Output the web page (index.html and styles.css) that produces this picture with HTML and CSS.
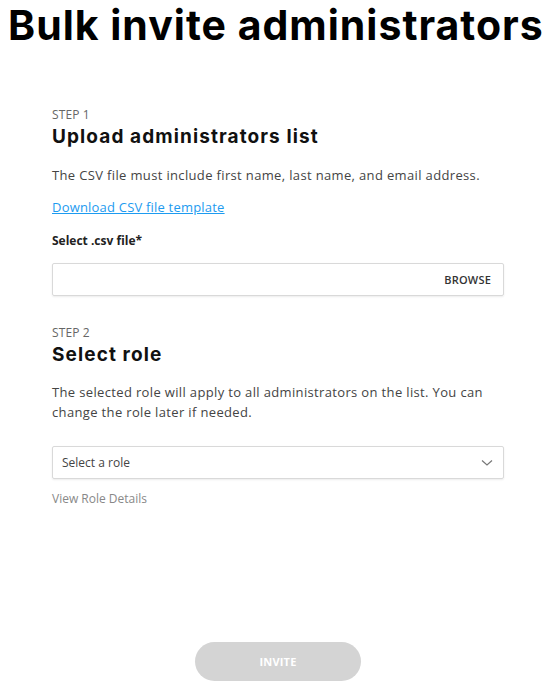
FILE: index.html
```html
<!DOCTYPE html>
<html>
<head>
<meta charset="utf-8">
<link rel="stylesheet" href="styles.css">
</head>
<body>
<h1 class="title">Bulk invite administrators</h1>
<main class="content">
  <section class="step">
    <div class="step-label">STEP 1</div>
    <h2 class="step-title">Upload administrators list</h2>
    <p class="desc">The CSV file must include first name, last name, and email address.</p>
    <a class="link" href="#">Download CSV file template</a>
    <div class="field-label">Select .csv file*</div>
    <div class="input-box">
      <span class="browse">BROWSE</span>
    </div>
  </section>
  <section class="step step2">
    <div class="step-label">STEP 2</div>
    <h2 class="step-title">Select role</h2>
    <p class="desc">The selected role will apply to all administrators on the list. You can<br>change the role later if needed.</p>
    <div class="select-box">
      <span class="placeholder">Select a role</span>
      <svg class="chevron" width="12" height="8" viewBox="0 0 12 8"><path d="M1 1.5 L6 6 L11 1.5" fill="none" stroke="#777" stroke-width="1.2"/></svg>
    </div>
    <div class="details">View Role Details</div>
  </section>
  <div class="actions">
    <button class="invite">INVITE</button>
  </div>
</main>
</body>
</html>
```
FILE: styles.css
```css
* { box-sizing: border-box; }
html, body { margin: 0; padding: 0; background: #fff; }
body {
  font-family: "Open Sans", "Noto Sans", sans-serif;
  width: 556px;
  height: 686px;
  overflow: hidden;
}
.title {
  margin: 0;
  padding: 0 0 0 8px;
  font-family: Inter, sans-serif;
  font-weight: 700;
  font-size: 41px;
  line-height: normal;
  letter-spacing: 1px;
  color: #000;
  white-space: nowrap;
}
.content {
  padding: 58px 52px 0 52px;
  display: flex;
  flex-direction: column;
}
.step { display: flex; flex-direction: column; align-items: flex-start; }
.step-label {
  font-size: 12px;
  line-height: 14px;
  color: #666;
  letter-spacing: 0.1px;
}
.step-title {
  margin: 3px 0 0 0;
  font-family: Inter, sans-serif;
  font-weight: 700;
  font-size: 19px;
  line-height: 24px;
  letter-spacing: 1.1px;
  color: #111;
}
.desc {
  margin: 16px 0 0 0;
  font-size: 13px;
  line-height: 20px;
  letter-spacing: 0.35px;
  color: #444;
  white-space: nowrap;
}
.link {
  margin-top: 14px;
  font-size: 13px;
  line-height: 16px;
  letter-spacing: 0.2px;
  color: #1d9bf0;
  text-decoration: underline;
}
.field-label {
  margin-top: 18px;
  font-size: 12px;
  line-height: 16px;
  font-weight: 700;
  color: #222;
}
.input-box {
  margin-top: 14px;
  width: 452px;
  height: 33px;
  border: 1px solid #d9d9d9;
  border-radius: 2px;
  box-shadow: 0 1px 2px rgba(0,0,0,0.08);
  display: flex;
  align-items: center;
  justify-content: flex-end;
  padding-right: 12px;
}
.browse {
  font-size: 11px;
  font-weight: 600;
  color: #333;
  letter-spacing: 0.2px;
}
.step2 { margin-top: 30px; }
.step2 .desc { margin-top: 15px; }
.select-box {
  margin-top: 24px;
  width: 452px;
  height: 33px;
  border: 1px solid #d9d9d9;
  border-radius: 2px;
  box-shadow: 0 1px 2px rgba(0,0,0,0.08);
  display: flex;
  align-items: center;
  justify-content: space-between;
  padding: 0 10px 0 9px;
}
.placeholder { font-size: 12px; color: #444; }
.chevron { display: block; }
.details {
  margin-top: 12px;
  font-size: 12px;
  line-height: 16px;
  color: #888;
}
.actions {
  margin-top: 135px;
  display: flex;
  justify-content: center;
}
.invite {
  width: 166px;
  height: 39px;
  border: none;
  border-radius: 20px;
  background: #d4d4d4;
  color: #fff;
  font-family: "Open Sans", sans-serif;
  font-size: 11px;
  font-weight: 700;
  letter-spacing: 0.2px;
}
```
